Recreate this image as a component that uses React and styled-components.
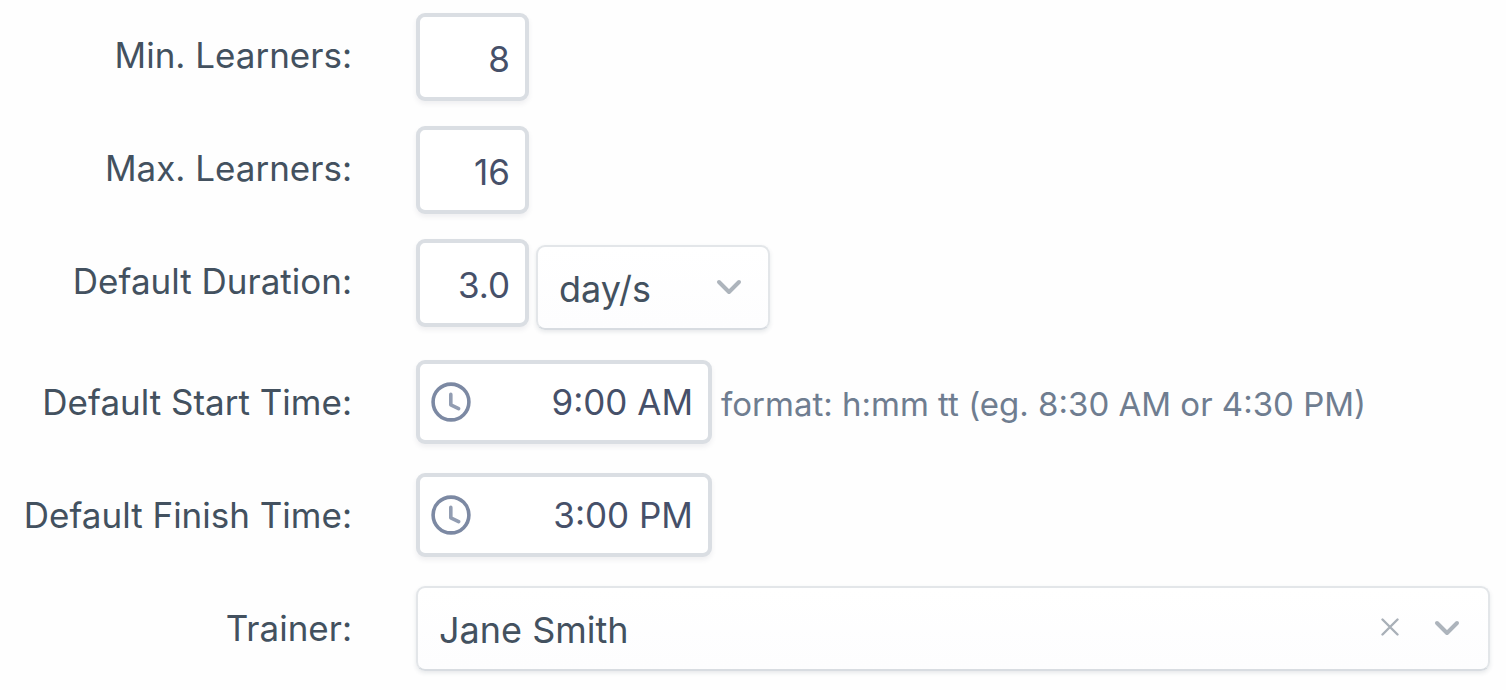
import React, { useState } from 'react';
import styled, { createGlobalStyle } from 'styled-components';

const GlobalStyle = createGlobalStyle`
  *, *::before, *::after {
    box-sizing: border-box;
  }

  body {
    margin: 0;
    background: #fefefe;
    color: #43515f;
    font-family: Inter, 'Liberation Sans', sans-serif;
    font-size: 35px;
  }
`;

const Form = styled.form`
  display: flex;
  flex-direction: column;
  gap: 30px;
  padding: 13px 16px 16px;
`;

const FieldGroup = styled.div`
  display: flex;
  flex-direction: column;
  gap: ${({ $gap }) => $gap};
`;

const Row = styled.div`
  display: grid;
  grid-template-columns: 336px minmax(0, 1fr);
  column-gap: 64px;
  align-items: start;
`;

const Label = styled.label`
  line-height: 84px;
  text-align: right;
  white-space: nowrap;
`;

const Controls = styled.div`
  display: flex;
  align-items: flex-start;
  gap: 7px;
`;

const TextInput = styled.input`
  display: block;
  border: 4px solid #dadee3;
  border-radius: 9px;
  background: #fff;
  box-shadow: 0 3px 5px rgba(60, 70, 90, 0.08);
  color: #465069;
  font: inherit;
  text-align: right;
  outline: none;

  &:focus {
    border-color: #a9b8d0;
  }
`;

const NumberInput = styled(TextInput)`
  width: 113px;
  height: 88px;
  padding: 4px 15px 0 0;
`;

const TimeInput = styled(TextInput)`
  width: 296px;
  height: 84px;
  padding: 0 15px 0 60px;
`;

const TimeField = styled.div`
  position: relative;
`;

const ClockIcon = styled.svg`
  position: absolute;
  top: 22px;
  left: 15px;
  width: 40px;
  height: 40px;
  fill: none;
  stroke: #7c89a3;
  stroke-width: 3.6;
  stroke-linecap: round;
  stroke-linejoin: round;
  pointer-events: none;
`;

const Hint = styled.span`
  padding: 4px 0 0 2px;
  color: #6f7d90;
  font-size: 33px;
  line-height: 80px;
  white-space: nowrap;
`;

const SelectField = styled.div`
  position: relative;
  flex: ${({ $wide }) => ($wide ? '1' : '0 0 234px')};
  margin-top: ${({ $wide }) => ($wide ? '0' : '6px')};
`;

const Select = styled.select`
  appearance: none;
  display: block;
  width: 100%;
  height: 85px;
  padding: 2px 80px 0 21px;
  border: 2px solid #e3e6e9;
  border-bottom-color: #d8dce1;
  border-radius: 9px;
  background: linear-gradient(#fff, #fdfdfe);
  box-shadow: 0 2px 4px rgba(60, 70, 90, 0.12);
  color: #43515f;
  font: inherit;
  font-size: 36px;
  outline: none;

  &:focus {
    border-color: #a9b8d0;
  }
`;

const Chevron = styled.svg`
  position: absolute;
  top: 34px;
  right: ${({ $right }) => $right};
  width: 26px;
  height: 16px;
  fill: none;
  stroke: #adb4bc;
  stroke-width: 4;
  stroke-linecap: round;
  stroke-linejoin: round;
  pointer-events: none;
`;

const ClearButton = styled.button`
  position: absolute;
  top: 28px;
  right: 87px;
  display: flex;
  padding: 4px;
  border: none;
  background: none;
  cursor: pointer;

  svg {
    width: 18px;
    height: 18px;
    fill: none;
    stroke: #a9b0b8;
    stroke-width: 2.4;
    stroke-linecap: round;
  }
`;

const Clock = () => (
  <ClockIcon viewBox="0 0 40 40" aria-hidden="true">
    <circle cx="20" cy="20" r="17.9" />
    <path d="M19.8 12.4v10.4l7.8 3.8" stroke="#929db2" />
  </ClockIcon>
);

const Arrow = ({ right }) => (
  <Chevron $right={right} viewBox="0 0 26 16" aria-hidden="true">
    <path d="M3 3l10 10 10-10" />
  </Chevron>
);

const App = () => {
  const [values, setValues] = useState({
    min: '8',
    max: '16',
    duration: '3.0',
    unit: 'day/s',
    start: '9:00 AM',
    finish: '3:00 PM',
    trainer: 'Jane Smith',
  });

  const bind = (name) => ({
    id: name,
    name,
    value: values[name],
    onChange: (e) => setValues({ ...values, [name]: e.target.value }),
  });

  return (
    <>
      <GlobalStyle />
      <Form>
        <FieldGroup $gap="25px">
          <Row>
            <Label htmlFor="min">Min. Learners:</Label>
            <Controls>
              <NumberInput type="text" inputMode="numeric" {...bind('min')} />
            </Controls>
          </Row>
          <Row>
            <Label htmlFor="max">Max. Learners:</Label>
            <Controls>
              <NumberInput type="text" inputMode="numeric" {...bind('max')} />
            </Controls>
          </Row>
          <Row>
            <Label htmlFor="duration">Default Duration:</Label>
            <Controls>
              <NumberInput type="text" inputMode="decimal" {...bind('duration')} />
              <SelectField>
                <Select aria-label="Duration unit" {...bind('unit')}>
                  <option>day/s</option>
                  <option>hour/s</option>
                </Select>
                <Arrow right="28px" />
              </SelectField>
            </Controls>
          </Row>
        </FieldGroup>
        <FieldGroup $gap="29px">
          <Row>
            <Label htmlFor="start">Default Start Time:</Label>
            <Controls>
              <TimeField>
                <TimeInput type="text" {...bind('start')} />
                <Clock />
              </TimeField>
              <Hint>format: h:mm tt (eg. 8:30 AM or 4:30 PM)</Hint>
            </Controls>
          </Row>
          <Row>
            <Label htmlFor="finish">Default Finish Time:</Label>
            <Controls>
              <TimeField>
                <TimeInput type="text" {...bind('finish')} />
                <Clock />
              </TimeField>
            </Controls>
          </Row>
          <Row>
            <Label htmlFor="trainer">Trainer:</Label>
            <Controls>
              <SelectField $wide>
                <Select {...bind('trainer')}>
                  <option value="" />
                  <option>Jane Smith</option>
                </Select>
                <ClearButton
                  type="button"
                  aria-label="Clear trainer"
                  onClick={() => setValues({ ...values, trainer: '' })}
                >
                  <svg viewBox="0 0 18 18" aria-hidden="true">
                    <path d="M1.5 1.5l15 15M16.5 1.5l-15 15" />
                  </svg>
                </ClearButton>
                <Arrow right="30px" />
              </SelectField>
            </Controls>
          </Row>
        </FieldGroup>
      </Form>
    </>
  );
};

export default App;
